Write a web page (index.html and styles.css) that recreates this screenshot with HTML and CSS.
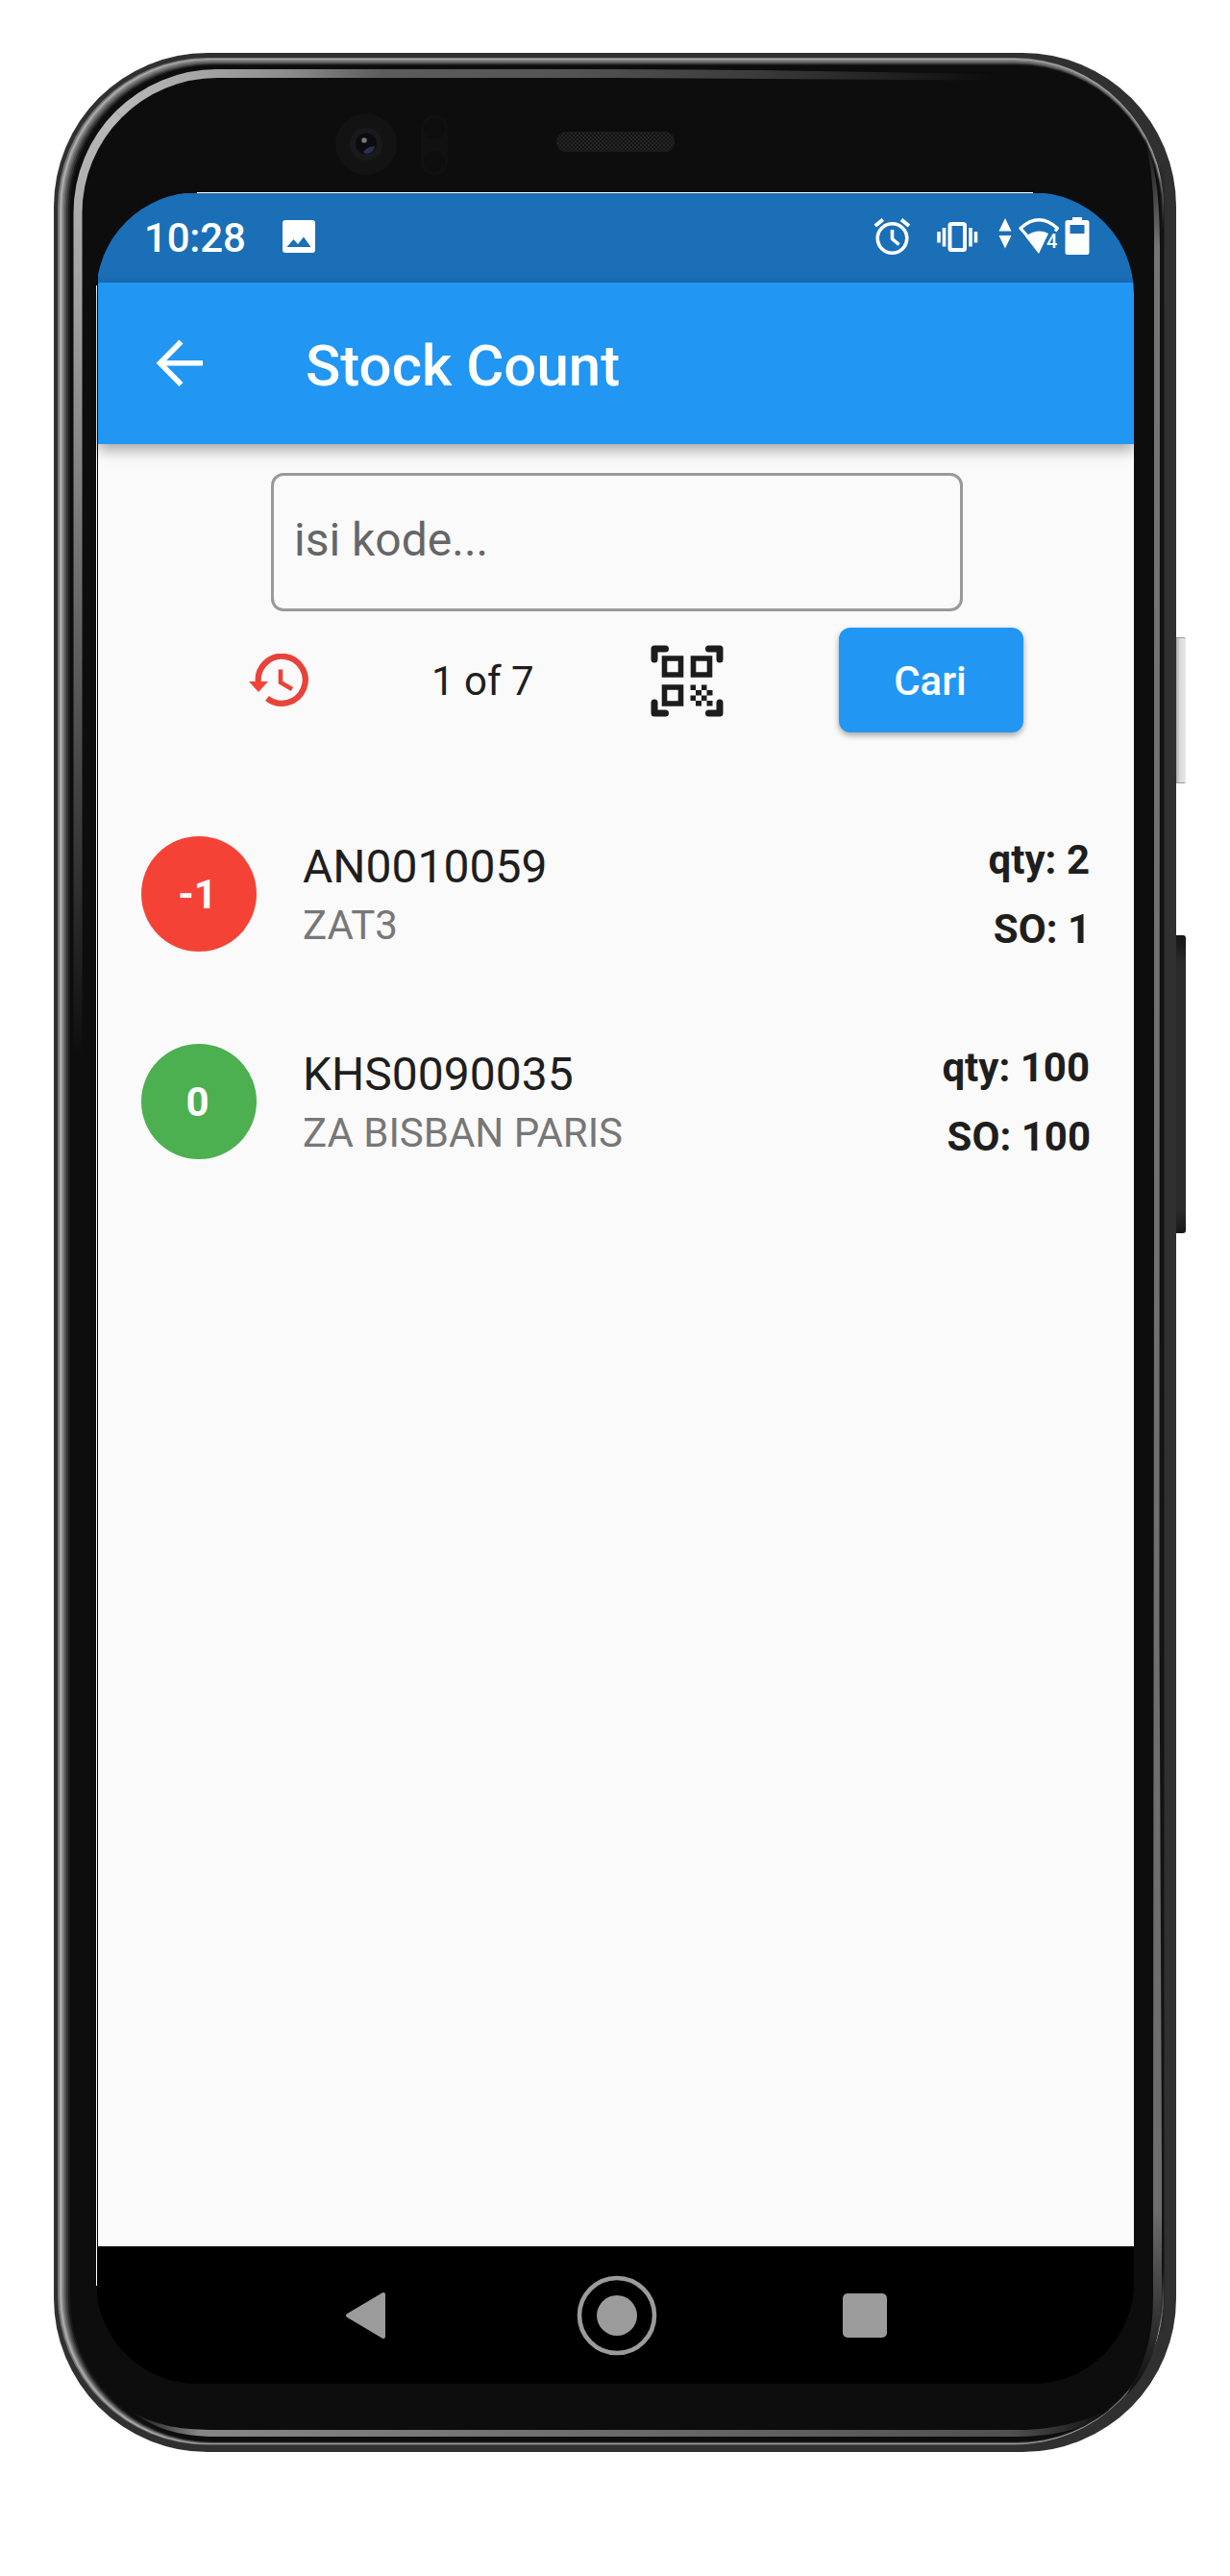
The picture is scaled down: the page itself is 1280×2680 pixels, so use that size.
FILE: index.html
```html
<!DOCTYPE html>
<html lang="id">
<head>
<meta charset="utf-8">
<title>Stock Count</title>
<link rel="stylesheet" href="styles.css">
</head>
<body>
<div class="phone">
  <svg class="frame" viewBox="0 0 1280 2680" aria-hidden="true">
    <defs>
      <linearGradient id="leftBand" gradientUnits="userSpaceOnUse" x1="0" y1="119" x2="0" y2="1100">
        <stop offset="0" stop-color="#b8b8b8"/><stop offset=".2" stop-color="#a0a0a0"/><stop offset=".4" stop-color="#808080"/><stop offset="1" stop-color="#0d0d0e"/>
      </linearGradient>
      <linearGradient id="topBand" gradientUnits="userSpaceOnUse" x1="123" y1="0" x2="1035" y2="0">
        <stop offset="0" stop-color="#b8b8b8"/><stop offset=".08" stop-color="#a8a8a8"/><stop offset=".2" stop-color="#8a8a8a"/><stop offset=".3" stop-color="#5c5c5c"/><stop offset=".5" stop-color="#555"/><stop offset=".72" stop-color="#3c3c3c"/><stop offset="1" stop-color="#0d0d0e"/>
      </linearGradient>
      <linearGradient id="bottomBand" gradientUnits="userSpaceOnUse" x1="135" y1="0" x2="1155" y2="0">
        <stop offset="0" stop-color="#0d0d0e"/><stop offset=".07" stop-color="#868686"/><stop offset=".35" stop-color="#747474"/><stop offset=".9" stop-color="#505050"/><stop offset="1" stop-color="#0d0d0e"/>
      </linearGradient>
      <linearGradient id="rightBand" gradientUnits="userSpaceOnUse" x1="0" y1="140" x2="0" y2="2490">
        <stop offset="0" stop-color="#0d0d0e"/><stop offset=".05" stop-color="#757575"/><stop offset=".92" stop-color="#6c6c6c"/><stop offset="1" stop-color="#0d0d0e"/>
      </linearGradient>
      <linearGradient id="rightEdge" x1="0" x2="0" y1="0" y2="1">
        <stop offset="0" stop-color="#131314" stop-opacity="0"/><stop offset=".03" stop-color="#131314"/><stop offset=".97" stop-color="#131314"/><stop offset="1" stop-color="#131314" stop-opacity="0"/>
      </linearGradient>
      <linearGradient id="keyLight" x1="0" x2="1" y1="0" y2="0">
        <stop offset="0" stop-color="#aaa"/><stop offset=".35" stop-color="#d8d8d8"/><stop offset="1" stop-color="#e8e8e8"/>
      </linearGradient>
      <linearGradient id="keyDark" x1="0" x2="0" y1="0" y2="1">
        <stop offset="0" stop-color="#151515"/><stop offset=".1" stop-color="#2b2b2b"/><stop offset=".92" stop-color="#2b2b2b"/><stop offset="1" stop-color="#181818"/>
      </linearGradient>
      <pattern id="mesh" width="4" height="4" patternUnits="userSpaceOnUse">
        <path fill="#262626" d="M0 0h2v2H0zM2 2h2v2H2z"/>
      </pattern>
    </defs>
    <rect x="1220" y="663" width="14" height="152" rx="2" fill="#999"/>
    <rect x="1224" y="664" width="10" height="150" rx="1" fill="url(#keyLight)"/>
    <rect x="1220" y="973" width="14" height="310" rx="3" fill="url(#keyDark)"/>

    <rect x="56" y="55" width="1168" height="2496" rx="160" fill="#303030"/>
    <rect x="60" y="60" width="1151" height="2483.500" rx="156" fill="#777"/>
    <rect x="62" y="61" width="1149" height="2482" rx="155" fill="#aaa"/>
    <rect x="64.500" y="62" width="1146" height="2480.500" rx="154" fill="#858585"/>
    <rect x="66" y="63.500" width="1144" height="2478.500" rx="153" fill="#6a6a6a"/>
    <rect x="67.500" y="65" width="1142" height="2476.500" rx="152" fill="#505050"/>
    <rect x="69" y="66" width="1140" height="2475" rx="151" fill="#363636"/>
    <rect x="71" y="67" width="1138" height="2474" rx="150" fill="#1a1a1a"/>
    <rect x="73" y="68" width="1135" height="2472" rx="149" fill="#0d0d0e"/>
    <rect x="1207" y="170" width="4.500" height="2260" fill="url(#rightEdge)"/>

    <path d="M81 1100V221.500A145 145 0 0 1 123.500 119" fill="none" stroke="url(#leftBand)" stroke-width="9"/>
    <path d="M123.500 119A145 145 0 0 1 226 76.500H640L1035 79" fill="none" stroke="url(#topBand)" stroke-width="9"/>
    <path d="M880 68H1040V76L1035 77L680 71H640V69H880z" fill="#0d0d0e"/>
    <path d="M1191 142C1204 175 1207 210 1207 260L1206.500 1700L1209 2250V2390C1207 2440 1195 2470 1172 2492C1192 2460 1200 2430 1200 2390V2250L1201 1300V240C1201 200 1198 170 1191 142z" fill="url(#rightBand)"/>
    <path d="M135 2508C165 2525 190 2528 225 2528H1060C1100 2528 1130 2518 1155 2507C1125 2530 1095 2535 1050 2535H225C185 2535 160 2526 135 2508z" fill="url(#bottomBand)"/>

    <circle cx="381" cy="150" r="32" fill="#131313"/>
    <circle cx="381" cy="150" r="17" fill="#1a1a1c"/>
    <circle cx="381" cy="149.500" r="11" fill="#0b0b10"/>
    <path d="M378 158c3-4 7-6 12-6c0 4-4 8-8 8c-2 0-3-1-4-2z" fill="#2a3150"/>
    <circle cx="379" cy="146" r="2.800" fill="#777"/>
    <rect x="438" y="120" width="28" height="62" rx="14" fill="#111"/>
    <circle cx="452" cy="134" r="11" fill="#0e0e0e"/>
    <circle cx="452" cy="168" r="11" fill="#0e0e0e"/>
    <rect x="579" y="137" width="123" height="21" rx="9" fill="#131313"/>
    <rect x="579.500" y="137.500" width="122" height="20" rx="9" fill="url(#mesh)" stroke="#1c1c1c"/>
    <path d="M100.500 297V2378M205 200.500H1075" stroke="#fff" fill="none"/>
  </svg>

  <div class="display">
    <header class="status">
      <span class="clock">10:28</span>
      <svg class="status-image" width="36" height="36" viewBox="0 0 36 36"><path fill="#fff" fill-rule="evenodd" d="M4 1h28a3 3 0 0 1 3 3v28a3 3 0 0 1-3 3H4a3 3 0 0 1-3-3V4a3 3 0 0 1 3-3zM5.500 29h25L23 18.500l-6 7.500-4.500-5z"/></svg>
      <svg class="status-icons" width="226" height="42" viewBox="910 225 226 42">
        <g fill="none" stroke="#fff">
          <circle cx="929.500" cy="248" r="15.300" stroke-width="3.600"/>
          <path stroke-width="3.600" d="M929.500 239v9.500l7 6"/>
          <path stroke-width="4" d="M911.800 235l8-6.500M947 235l-8-6.500"/>
          <rect x="989.500" y="233" width="15.500" height="27" rx="1.500" stroke-width="4"/>
          <path stroke-width="3.600" d="M983.500 237v19.500M978 241v11.500M1011 237v19.500M1016.500 241v11.500"/>
          <path stroke-width="3.200" stroke-linejoin="round" d="M1070 245.500L1063 237.500Q1082 220 1101.500 237.500L1099 240.500"/>
        </g>
        <path fill="#fff" d="M1040.500 240.500h13l-6.500-13.500zM1040.500 245h13l-6.500 13.500zM1082 264l-14-18q13-9 24-3z"/>
        <text x="1090" y="258" class="wifi-gen">4</text>
        <path fill="#fff" fill-rule="evenodd" d="M1117 229v-3h10v3h5a2.500 2.500 0 0 1 2.500 2.500v31a2.500 2.500 0 0 1-2.500 2.500h-20a2.500 2.500 0 0 1-2.500-2.500v-31a2.500 2.500 0 0 1 2.500-2.500zM1114.500 234v9h15v-9z"/>
      </svg>
    </header>

    <nav class="appbar">
      <svg width="50" height="50" viewBox="0 0 50 50"><path fill="none" stroke="#fff" stroke-width="5.600" d="M26.500 2.500L4.500 24.800l22 22.200M4 24.800h45"/></svg>
      <h1 class="title">Stock Count</h1>
    </nav>

    <main class="content">
      <div class="field">isi kode...</div>
      <div class="tools">
        <svg class="history" width="64" height="58" viewBox="0 0 64 58">
          <path fill="none" stroke="#e8433a" stroke-width="6.200" d="M11 31A24.500 24.500 0 1 1 20 46.500"/>
          <path fill="#f44336" d="M1 29h20L11 40z"/>
          <path fill="none" stroke="#e8433a" stroke-width="4.600" d="M34 16.500v13.500l12 7"/>
        </svg>
        <span class="count">1 of 7</span>
        <svg class="qr" width="76" height="75" viewBox="0 0 76 75">
          <path fill="none" stroke="#1c1c1c" stroke-width="7" stroke-linecap="round" stroke-linejoin="round" d="M4 15V4H15.500M60.500 4H72V15M4 60V71H15.500M60.500 71H72V60"/>
          <path fill="none" stroke="#1c1c1c" stroke-width="5.600" d="M14.500 14h17v17h-17zM44.500 14h17v17h-17zM14.500 44h17v17h-17z"/>
          <path fill="#1c1c1c" d="M41.500 41.500h5.500v5.500h-5.500zM53 41.500h5.500v5.500H53zM47 47h6v5.500h-6zM58.500 47h6v5.500h-6zM41.500 52.500H47V58h-5.500zM53 52.500h5.500V58H53zM47 58h6v5.500h-6zM58.500 58h6v5.500h-6z"/>
        </svg>
        <button class="search" type="button">Cari</button>
      </div>

      <ul class="list">
        <li class="item">
          <span class="avatar minus">-1</span>
          <div class="info"><div class="code">AN0010059</div><div class="name">ZAT3</div></div>
          <div class="amounts"><div>qty: 2</div><div class="so">SO: 1</div></div>
        </li>
        <li class="item">
          <span class="avatar even">0</span>
          <div class="info"><div class="code">KHS0090035</div><div class="name">ZA BISBAN PARIS</div></div>
          <div class="amounts"><div>qty: 100</div><div class="so">SO: 100</div></div>
        </li>
      </ul>
    </main>

    <footer class="navbar">
      <svg width="44" height="50" viewBox="0 0 44 50"><path fill="#9b9b9b" stroke="#9b9b9b" stroke-width="4" stroke-linejoin="round" d="M3 25L40 3V47z"/></svg>
      <svg width="84" height="84" viewBox="0 0 84 84"><circle cx="42" cy="42" r="39" fill="none" stroke="#9b9b9b" stroke-width="4.600"/><circle cx="42" cy="42" r="21" fill="#9b9b9b"/></svg>
      <span class="recent"></span>
    </footer>
  </div>
</div>
</body>
</html>
```
FILE: styles.css
```css
* { box-sizing: border-box; }
body { margin: 0; background: #fff; font-family: Roboto, "Liberation Sans", sans-serif; }
svg { display: block; flex: none; }

.phone { position: relative; width: 1280px; height: 2680px; padding: 200px 100px; overflow: hidden; }
.frame { position: absolute; inset: 0; width: 1280px; height: 2680px; }
.display {
  position: relative; width: 1080px; height: 2280px; padding: 1px 0 0 2px;
  display: flex; flex-direction: column; overflow: hidden;
  border-radius: 106px; background: linear-gradient(#000, #000) 1px 1px no-repeat;
}

.status { height: 93px; flex: none; display: flex; align-items: center; padding: 0 45px 0 48px; background: #1a6fb7; color: #fff; }
.clock { font-size: 42px; font-weight: 500; line-height: 60px; width: 143px; letter-spacing: -.2px; }
.status-image { margin-top: -3px; }
.status-icons { margin-left: auto; margin-top: -3px; }
.wifi-gen { font: 500 20px Roboto, sans-serif; fill: #fff; stroke: #1a6fb7; stroke-width: 2px; paint-order: stroke; }

.appbar { position: relative; z-index: 1; height: 168px; flex: none; display: flex; align-items: center; padding-left: 60px; background: #2196f3; color: #fff; box-shadow: 0 6px 14px rgba(0, 0, 0, .35); }
.title { margin: 6px 0 0 106px; font-size: 60px; font-weight: 500; line-height: 80px; white-space: nowrap; }

.content { flex: 1; display: flex; flex-direction: column; padding-top: 30px; background: #fafafa; color: #1e1e1e; }
.field { width: 720px; height: 144px; flex: none; margin-left: 180px; padding: 0 21px; border: 3px solid #999; border-radius: 13px; font-size: 48px; line-height: 133px; color: #666; }
.tools { height: 109px; flex: none; margin-top: 17px; padding-left: 156px; display: flex; align-items: center; font-size: 42px; }
.history { margin-top: 2px; }
.count { margin: 2px 0 0 127px; width: 228px; line-height: 60px; }
.qr { margin-top: 2px; }
.search { margin-left: 120px; width: 192px; height: 109px; padding: 2px 2px 0 0; border: 0; border-radius: 12px; background: #2196f3; color: #fff; font: 500 42px Roboto, sans-serif; box-shadow: 0 3px 6px rgba(0, 0, 0, .35); }

.list { margin: 60px 0 0; padding: 0 46px 0 45px; list-style: none; }
.item { height: 216px; display: flex; align-items: center; }
.avatar { width: 120px; height: 120px; border-radius: 50%; color: #fff; font-size: 42px; font-weight: 700; line-height: 122px; text-align: center; padding-right: 3px; }
.minus { background: #f44336; }
.even { background: #4caf50; }
.info { margin: 5px 0 0 48px; }
.code { font-size: 48px; line-height: 61px; }
.name { font-size: 42px; line-height: 62px; color: #777; }
.amounts { margin: 1px 0 0 auto; font-size: 42px; font-weight: 700; line-height: 72px; text-align: right; }
.so { margin-right: -1px; }

.navbar { height: 143px; flex: none; display: flex; align-items: center; padding-left: 257px; background: #000; }
.navbar svg + svg { margin-left: 197px; }
.recent { width: 46px; height: 46px; margin-left: 193px; border-radius: 5px; background: #9b9b9b; }
```
